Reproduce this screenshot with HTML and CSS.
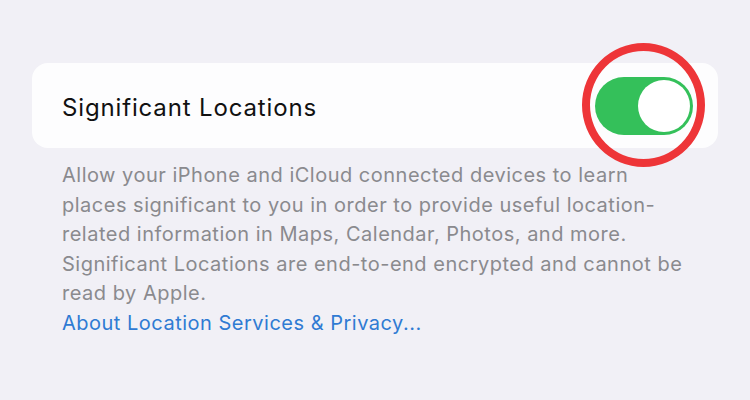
FILE: index.html
```html
<!DOCTYPE html>
<html lang="en">
<head>
    <meta charset="UTF-8">
    <title>Significant Locations</title>
    <link rel="stylesheet" href="styles.css">
</head>
<body>
    <div class="page">
        <div class="card">
            <span class="card-title">Significant Locations</span>
            <div class="toggle-wrap">
                <div class="toggle on">
                    <div class="knob"></div>
                </div>
                <div class="ring"></div>
            </div>
        </div>

        <div class="footer">
            <p>Allow your iPhone and iCloud connected devices to learn<br>
            places significant to you in order to provide useful location-<br>
            related information in Maps, Calendar, Photos, and more.<br>
            Significant Locations are end-to-end encrypted and cannot be<br>
            read by Apple.</p>
            <a href="#">About Location Services &amp; Privacy...</a>
        </div>
    </div>
</body>
</html>
```

FILE: styles.css
```css
body {
    margin: 0;
    background-color: #f1f0f6;
    font-family: "Inter", "Liberation Sans", sans-serif;
}
.page {
    padding: 63px 32px 0 32px;
}
.card {
    background: #fdfdfe;
    border-radius: 16px;
    height: 85px;
    display: flex;
    align-items: center;
    justify-content: space-between;
    padding: 0 25px 0 30px;
}
.card-title {
    font-size: 24px;
    color: #111;
    letter-spacing: 0.85px;
    padding-top: 3px;
}
.toggle-wrap {
    position: relative;
}
.toggle {
    width: 98px;
    height: 58px;
    border-radius: 29px;
    background: #34c05a;
    position: relative;
}
.knob {
    position: absolute;
    right: 3px;
    top: 3px;
    width: 52px;
    height: 52px;
    border-radius: 50%;
    background: #fff;
}
.ring {
    position: absolute;
    left: -13px;
    top: -34px;
    width: 107px;
    height: 108px;
    border: 8px solid #ee3538;
    border-radius: 50%;
}
.footer {
    padding: 13px 0 0 30px;
    font-size: 20px;
    line-height: 29.5px;
    letter-spacing: 0.5px;
    white-space: nowrap;
}
.footer p {
    margin: 0;
    color: #8a8a8e;
}
.footer a {
    color: #2f7bd3;
    text-decoration: none;
}
```
